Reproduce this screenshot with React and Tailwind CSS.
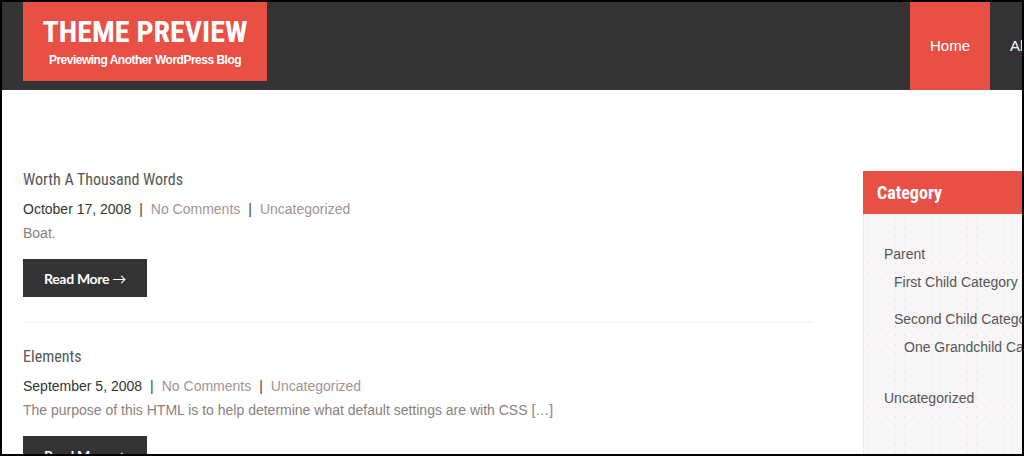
const condensed = "font-['Roboto_Condensed',sans-serif]";

function Meta({ date }) {
  return (
    <div className="mt-[5px] h-6 leading-6 text-[14px] text-[#333] font-['Liberation_Sans',Arial,sans-serif]">
      {date}
      <span className="mx-[8px] text-[#444]">|</span>
      <a className="text-[#a39393]">No Comments</a>
      <span className="mx-[8px] text-[#444]">|</span>
      <a className="text-[#a39393]">Uncategorized</a>
    </div>
  );
}

function Post({ title, date, excerpt }) {
  return (
    <article>
      <h2 className={`${condensed} h-6 leading-6 text-[16px] text-[#555]`}>{title}</h2>
      <Meta date={date} />
      <p className="h-6 leading-6 text-[14px] text-[#8c8080] font-['Liberation_Sans',Arial,sans-serif]">{excerpt}</p>
      <button className="mt-[14px] h-[38px] w-[124px] bg-[#333] text-white text-[14px] font-bold font-['Lato',sans-serif] tracking-[-0.3px]">
        Read More <span className="font-normal">→</span>
      </button>
    </article>
  );
}

export default function App() {
  return (
    <div className="w-[1024px] h-[456px] border-2 border-black overflow-hidden bg-white">
      <header className="h-[88px] bg-[#333] flex items-start">
        <div className="ml-[21px] w-[244px] h-[79px] bg-[#e84f45] flex flex-col items-center pt-[14px] shrink-0">
          <div className={`${condensed} font-bold text-white text-[30px] leading-[32px]`}>THEME PREVIEW</div>
          <div className="mt-[5px] text-white text-[12px] font-bold leading-[14px] font-['Liberation_Sans',Arial,sans-serif] tracking-[-0.5px]">
            Previewing Another WordPress Blog
          </div>
        </div>
        <nav className="ml-[643px] flex h-[88px] shrink-0 text-white text-[15px] font-['Liberation_Sans',Arial,sans-serif]">
          <a className="bg-[#e84f45] w-[80px] flex items-center justify-center">Home</a>
          <a className="pl-[20px] pr-[20px] flex items-center">About</a>
        </nav>
      </header>

      <div className="flex">
        <main className="ml-[21px] w-[790px] pt-[78px] shrink-0">
          <Post title="Worth A Thousand Words" date="October 17, 2008" excerpt="Boat." />
          <div className="mt-[25px] h-px bg-[#f1f1f1]" />
          <div className="mt-[22px]">
            <Post
              title="Elements"
              date="September 5, 2008"
              excerpt="The purpose of this HTML is to help determine what default settings are with CSS […]"
            />
          </div>
        </main>

        <aside className="ml-[50px] mt-[81px] w-[300px] shrink-0">
          <div className={`${condensed} h-[43px] bg-[#e84f45] text-white text-[18px] font-bold pl-[14px] flex items-center`}>
            Category
          </div>
          <div className="h-[300px] border-l border-dotted border-[#ddd] bg-[#f7f5f5] bg-[radial-gradient(#d8d8d8_0.8px,transparent_1px)] bg-[size:9px_9px] pl-[20px] pt-[28px] text-[14px] text-[#555] font-['Liberation_Sans',Arial,sans-serif]">
            <ul>
              <li className="leading-6">
                Parent
                <ul className="pl-[10px]">
                  <li className="mt-[4px] leading-6">First Child Category</li>
                  <li className="mt-[13px] leading-6">
                    Second Child Category
                    <ul className="pl-[10px]">
                      <li className="mt-[4px] leading-6">One Grandchild Category</li>
                    </ul>
                  </li>
                </ul>
              </li>
              <li className="mt-[27px] leading-6">Uncategorized</li>
            </ul>
          </div>
        </aside>
      </div>
    </div>
  );
}
